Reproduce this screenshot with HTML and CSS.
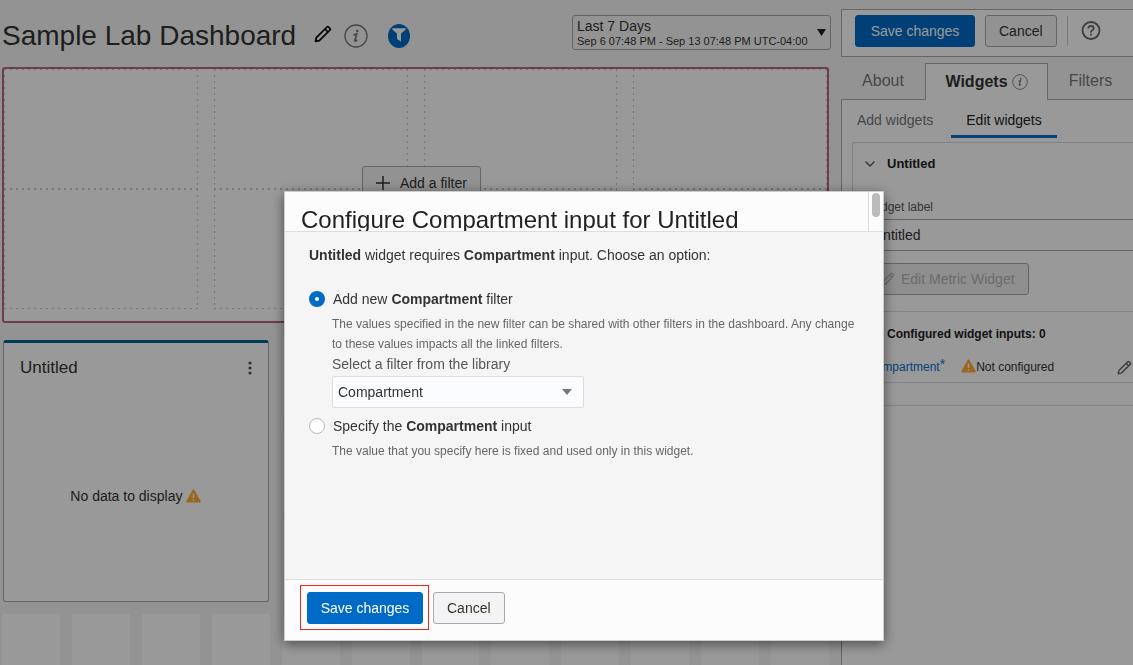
FILE: index.html
```html
<!DOCTYPE html>
<html lang="en">
<head>
<meta charset="utf-8">
<title>Sample Lab Dashboard</title>
<link rel="stylesheet" href="styles.css">
</head>
<body>
<svg class="defs" aria-hidden="true">
  <symbol id="pencil" viewBox="0 0 18 18"><path d="M1.500 16.500l.8-3.800L13 2q.7-.7 1.400 0l1.600 1.600q.7.700 0 1.400L5.300 15.700zM11 4l3 3" fill="none" stroke="currentColor" stroke-width="1.700" stroke-linejoin="round"/></symbol>
  <symbol id="info" viewBox="0 0 24 24"><circle cx="12" cy="12" r="11" fill="none" stroke="currentColor" stroke-width="1.300"/><circle cx="13.200" cy="7" r="1.300" fill="currentColor"/><path d="M9.500 10.800l3.200-.9-1.800 6.300q-.2 1.200.8.800l1.500-1.200" fill="none" stroke="currentColor" stroke-width="1.700"/></symbol>
  <symbol id="warning" viewBox="0 0 15 14"><path d="M6.800.8q.7-1 1.400 0L14.600 12q.5 1.500-.9 1.500H1.300Q-.1 13.500.4 12z" fill="currentColor"/><path d="M7.500 4.500V9M7.500 10.300v1.500" stroke="#fff" stroke-width="1.500"/></symbol>
</svg>
<div class="page">
  <main class="main">
    <header class="header">
      <h1 class="title">Sample Lab Dashboard</h1>
      <button class="icon-button edit" aria-label="Edit name"><svg width="18" height="18"><use href="#pencil"/></svg></button>
      <button class="icon-button about" aria-label="Information"><svg width="24" height="24"><use href="#info"/></svg></button>
      <button class="icon-button" aria-label="Filters"><svg width="22" height="24" viewBox="0 0 22 24"><ellipse cx="11" cy="12" rx="11" ry="12" fill="#006bc6"/><path d="M4 4.300h14q-.3 1.700-5 5.200V17.500L9 15V9.500Q4.300 6 4 4.300z" fill="#fff"/></svg></button>
      <button class="range"><span><span class="range-name">Last 7 Days</span><span class="range-dates">Sep 6 07:48 PM - Sep 13 07:48 PM UTC-04:00</span></span><svg width="9" height="7" viewBox="0 0 9 7"><path d="M0 0h9L4.500 7z" fill="#222"/></svg></button>
    </header>
    <section class="filters">
      <div class="cell"></div><div class="cell"></div><div class="cell"></div><div class="cell"></div>
      <div class="cell"></div><div class="cell"></div><div class="cell"></div><div class="cell"></div>
      <button class="button add-filter"><svg width="14" height="14" viewBox="0 0 14 14"><path d="M7 0v14M0 7h14" stroke="currentColor" stroke-width="1.500"/></svg>Add a filter</button>
    </section>
    <section class="canvas">
      <article class="card">
        <div class="card-head"><h2>Untitled</h2><button class="icon-button" aria-label="Actions"><svg width="4" height="14" viewBox="0 0 4 14" fill="#555"><circle cx="2" cy="2" r="1.600"/><circle cx="2" cy="7" r="1.600"/><circle cx="2" cy="12" r="1.600"/></svg></button></div>
        <p class="empty">No data to display <svg class="warn" width="15" height="14"><use href="#warning"/></svg></p>
      </article>
      <i></i><i></i><i></i><i></i><i></i><i></i><i></i><i></i>
      <i></i><i></i><i></i><i></i><i></i><i></i><i></i><i></i>
      <i></i><i></i><i></i><i></i><i></i><i></i><i></i><i></i>
      <i></i><i></i><i></i><i></i><i></i><i></i><i></i><i></i><i></i><i></i><i></i><i></i>
    </section>
  </main>

  <aside class="side">
    <div class="toolbar">
      <button class="button primary">Save changes</button>
      <button class="button">Cancel</button>
      <span class="rule"></span>
      <button class="icon-button help" aria-label="Help"><svg width="20" height="20" viewBox="0 0 20 20" fill="none" stroke="currentColor" stroke-width="1.800"><circle cx="10" cy="9.500" r="8.500"/><path d="M7.300 7.500q0-2.700 2.700-2.700T12.700 7.300q0 1.200-1.400 2T10 11.500"/><path d="M10 12.800v1.800"/></svg></button>
    </div>
    <nav class="tabs">
      <a href="#about">About</a>
      <a href="#widgets" class="current">Widgets <svg width="16" height="16"><use href="#info"/></svg></a>
      <a href="#filters">Filters</a>
    </nav>
    <div class="panel">
      <nav class="subtabs"><a href="#add">Add widgets</a><a href="#edit" class="current">Edit widgets</a></nav>
      <section class="widget">
        <h3 class="widget-name"><svg width="10" height="6" viewBox="0 0 10 6"><path d="M.5.500L5 5 9.500.500" fill="none" stroke="#555" stroke-width="1.400"/></svg>Untitled</h3>
        <div class="widget-form">
          <label for="label">Widget label</label>
          <input id="label" type="text" value="Untitled">
          <button class="button" disabled><svg width="14" height="14"><use href="#pencil"/></svg>Edit Metric Widget</button>
        </div>
        <div class="inputs">
          <h3>Configured widget inputs: 0</h3>
          <div class="input-row"><a href="#compartment">Compartment<span class="star">*</span></a><span class="status"><svg class="warn" width="15" height="14"><use href="#warning"/></svg>Not configured</span><button class="icon-button" aria-label="Edit input"><svg width="15" height="15"><use href="#pencil"/></svg></button></div>
        </div>
        <div class="widget-end"></div>
      </section>
    </div>
  </aside>
</div>

<div class="overlay">
  <div class="dialog" role="dialog" aria-labelledby="dialog-title">
    <header class="dialog-head"><h2 id="dialog-title">Configure Compartment input for Untitled</h2><span class="track"><span class="thumb"></span></span></header>
    <div class="dialog-body">
      <p class="lead"><b>Untitled</b> widget requires <b>Compartment</b> input. Choose an option:</p>
      <label class="option"><input type="radio" name="source" checked><span>Add new <b>Compartment</b> filter</span></label>
      <p class="hint">The values specified in the new filter can be shared with other filters in the dashboard. Any change to these values impacts all the linked filters.</p>
      <label class="select-label" for="library">Select a filter from the library</label>
      <div class="select"><select id="library"><option>Compartment</option></select><svg width="10" height="6" viewBox="0 0 10 6" aria-hidden="true"><path d="M0 0h10L5 6z" fill="#777"/></svg></div>
      <label class="option"><input type="radio" name="source"><span>Specify the <b>Compartment</b> input</span></label>
      <p class="hint">The value that you specify here is fixed and used only in this widget.</p>
    </div>
    <footer class="dialog-foot"><span class="highlight"><button class="button primary">Save changes</button></span><button class="button">Cancel</button></footer>
  </div>
</div>
</body>
</html>
```

FILE: styles.css
```css
* { box-sizing: border-box; }
body { margin: 0; font: 14px/20px "Liberation Sans", Arial, sans-serif; color: #333; background: #f6f6f6; }
h1, h2, h3, p { margin: 0; font-weight: normal; }
a { color: inherit; text-decoration: none; }
button, input, select { font: inherit; color: inherit; }
svg { flex: none; }
.defs { position: absolute; width: 0; height: 0; }
.icon-button { display: flex; padding: 0; border: 0; background: none; }
.button { display: inline-flex; align-items: center; justify-content: center; height: 32px; padding: 0 13px; border: 1px solid #a4aab5; border-radius: 3px; background: #f3f3f3; white-space: nowrap; }
.button.primary { border-color: #006bc6; background: #006bc6; color: #fff; }
.warn { color: #ffaa33; vertical-align: -2px; }

.page { display: flex; height: 100vh; overflow: hidden; }
.main { flex: 1; min-width: 0; padding: 0 12px 0 2px; }
.header { display: flex; align-items: center; height: 67px; padding-top: 4px; }
.title { font-size: 28px; line-height: 36px; white-space: nowrap; }
.edit { margin: 0 12px 4px 18px; color: #000; }
.about { margin-right: 20px; color: #777; }
.range { display: flex; align-items: center; justify-content: space-between; width: 259px; height: 35px; margin: 0 -2px 6px auto; padding: 0 4px; border: 1px solid #a4aab5; border-radius: 3px; background: #f6f6f6; text-align: left; }
.range span { display: block; }
.range-name { line-height: 16px; }
.range-dates { font-size: 11px; line-height: 14px; white-space: nowrap; }

.filters { position: relative; display: grid; grid-template-columns: repeat(4, 1fr); grid-auto-rows: 120px; column-gap: 16px; padding-bottom: 12px; border: 2px solid #b8677b; border-radius: 3px; background: #fff; }
.cell {
  --h: repeating-linear-gradient(90deg, #c8c8c8 0 2px, transparent 2px 6px);
  --v: repeating-linear-gradient(#c8c8c8 0 2px, transparent 2px 6px);
  background: var(--h) top / 100% 1px no-repeat, var(--h) bottom / 100% 1px no-repeat, var(--v) left / 1px 100% no-repeat, var(--v) right / 1px 100% no-repeat;
}
.add-filter { position: absolute; left: 358px; top: 97px; height: 34px; gap: 10px; }

.canvas { display: grid; grid-template-columns: repeat(12, 1fr); grid-auto-rows: 80px; gap: 12px; margin-top: 15px; }
.canvas i { background: #fff; }
.card { grid-area: 1 / 1 / span 3 / span 4; display: flex; flex-direction: column; margin: 2px 1px 0; border: 1px solid #aaa; border-top: 3px solid #00688c; border-radius: 3px; background: #fff; }
.card-head { display: flex; align-items: center; justify-content: space-between; padding: 15px 16px 0 16px; }
.card-head h2 { font-size: 17px; }
.empty { margin: auto; padding-top: 12px; }

.side { display: flex; flex-direction: column; width: 292px; padding-top: 9px; white-space: nowrap; }
.toolbar { display: flex; flex: none; align-items: center; height: 48px; padding: 0 13px 4px; border: 1px solid #aaa; border-right: 0; background: #fff; }
.toolbar .primary { width: 120px; margin-right: 10px; }
.rule { width: 1px; height: 30px; margin: 0 13px 0 10px; background: #ccc; }
.help { color: #666; }
.tabs { display: grid; flex: none; grid-template-columns: 84px 123px 1fr; height: 37px; margin-top: 6px; font-size: 16px; color: #777; }
.tabs a { display: flex; align-items: center; justify-content: center; border-bottom: 1px solid #aaa; }
.tabs .current { gap: 4px; border: 1px solid #aaa; border-bottom: 0; background: #fff; color: #333; font-weight: bold; }
.tabs svg { color: #777; }
.panel { flex: 1; padding-left: 10px; border-left: 1px solid #aaa; background: #fff; }
.subtabs { display: flex; height: 38px; color: #777; }
.subtabs a { padding: 10px 14px 0 5px; }
.subtabs .current { padding: 10px 15px 0; margin-left: 4px; border-bottom: 3px solid #0572ce; color: #222; }
.widget { margin-top: 4px; border: 1px solid #d8d8e8; border-right: 0; border-radius: 3px 0 0 0; font-size: 12px; }
.widget h3 { font-size: 13px; font-weight: bold; color: #222; }
.widget-name { display: flex; align-items: center; gap: 12px; height: 42px; padding-left: 12px; }
.widget-form { display: flex; flex-direction: column; align-items: flex-start; padding: 12px 0 16px 14px; font-size: 14px; }
.widget-form label { font-size: 12px; color: #555; }
.widget-form input { width: 100%; height: 32px; margin: 2px 0 12px; padding: 0 5px; border: 1px solid #aaa; border-right: 0; background: #fff; }
.widget-form .button { gap: 6px; background: #eee; color: #b4b4b4; }
.inputs { padding: 12px 0 0 14px; border-top: 1px solid #d8d8e8; border-bottom: 1px solid #d8d8e8; }
.widget .inputs h3 { padding-left: 20px; font-size: 12px; }
.input-row { display: flex; align-items: center; height: 30px; margin: 8px 0 0; }
.input-row a { color: #0572ce; }
.star { font-size: 14px; line-height: 12px; vertical-align: 2px; }
.status { margin-left: 16px; }
.input-row .icon-button { margin: 0 1px 0 auto; color: #666; }
.widget-end { height: 22px; }

.overlay { position: fixed; inset: 0; background: rgba(0, 0, 0, .4); }
.dialog { position: absolute; left: 284px; top: 191px; width: 600px; border: 1px solid #ccc; background: #fcfcfc; box-shadow: 0 3px 12px rgba(0, 0, 0, .5); }
.dialog-head { display: flex; justify-content: space-between; height: 40px; overflow: hidden; border-bottom: 1px solid #ddd; }
.dialog-head h2 { padding: 12px 0 0 16px; font-size: 24px; line-height: 32px; color: #222; white-space: nowrap; }
.track { width: 15px; padding: 1px 3px; border-left: 1px solid #ddd; }
.thumb { display: block; width: 8px; height: 24px; border-radius: 4px; background: #bbb; }
.dialog-body { min-height: 347px; padding: 13px 24px; background: #f5f5f5; }
.lead { margin-bottom: 24px; }
.option { display: flex; align-items: center; gap: 8px; }
.option input { appearance: none; width: 16px; height: 16px; margin: 0; border: 1px solid #bbb; border-radius: 50%; background: #fff; }
.option input:checked { border: 6px solid #006bc6; }
.hint { padding: 5px 0 0 23px; font-size: 12px; color: #666; }
.select-label { display: block; margin-left: 23px; color: #555; }
.select { display: flex; align-items: center; width: 252px; margin: 2px 0 8px 23px; }
.select select { appearance: none; width: 100%; height: 32px; padding: 0 5px; border: 1px solid #ddd; border-radius: 2px; background: #fbfcff; }
.select svg { margin-left: -22px; pointer-events: none; }
.dialog-foot { display: flex; align-items: center; gap: 4px; padding: 5px 15px 10px; border-top: 1px solid #ddd; }
.highlight { padding: 6px 5px 5px 6px; border: 1px solid #f52314; }
.dialog-foot .primary { width: 116px; }
```
